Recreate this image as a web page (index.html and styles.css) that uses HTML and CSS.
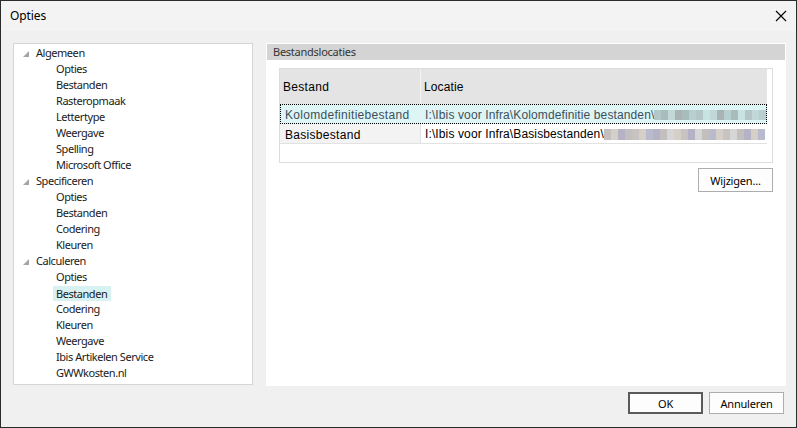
FILE: index.html
```html
<!DOCTYPE html>
<html lang="nl">
<head>
<meta charset="utf-8">
<title>Opties</title>
<link rel="stylesheet" href="styles.css">
</head>
<body>
<div class="window">
  <div class="titlebar">
    <span class="title">Opties</span>
    <svg class="close" width="12" height="12" viewBox="0 0 12 12"><path d="M1 1 L11 11 M11 1 L1 11" stroke="#000" stroke-width="1.1" fill="none"/></svg>
  </div>
  <div class="main">
    <div class="content">
      <div class="tree">
        <div class="node top"><svg class="tri" width="8" height="8" viewBox="0 0 8 8"><polygon points="7,1 7,7 1,7" fill="#a4a4a4"/></svg><span class="label">Algemeen</span></div>
        <div class="node child"><span class="label">Opties</span></div>
        <div class="node child"><span class="label">Bestanden</span></div>
        <div class="node child"><span class="label">Rasteropmaak</span></div>
        <div class="node child"><span class="label">Lettertype</span></div>
        <div class="node child"><span class="label">Weergave</span></div>
        <div class="node child"><span class="label">Spelling</span></div>
        <div class="node child"><span class="label">Microsoft Office</span></div>
        <div class="node top"><svg class="tri" width="8" height="8" viewBox="0 0 8 8"><polygon points="7,1 7,7 1,7" fill="#a4a4a4"/></svg><span class="label">Specificeren</span></div>
        <div class="node child"><span class="label">Opties</span></div>
        <div class="node child"><span class="label">Bestanden</span></div>
        <div class="node child"><span class="label">Codering</span></div>
        <div class="node child"><span class="label">Kleuren</span></div>
        <div class="node top"><svg class="tri" width="8" height="8" viewBox="0 0 8 8"><polygon points="7,1 7,7 1,7" fill="#a4a4a4"/></svg><span class="label">Calculeren</span></div>
        <div class="node child"><span class="label">Opties</span></div>
        <div class="node child"><span class="label selected">Bestanden</span></div>
        <div class="node child"><span class="label">Codering</span></div>
        <div class="node child"><span class="label">Kleuren</span></div>
        <div class="node child"><span class="label">Weergave</span></div>
        <div class="node child"><span class="label">Ibis Artikelen Service</span></div>
        <div class="node child"><span class="label">GWWkosten.nl</span></div>
      </div>
      <div class="panel">
        <div class="panel-header">Bestandslocaties</div>
        <div class="panel-body">
          <div class="grid">
            <div class="grid-inner">
              <div class="row head">
                <div class="cell c1">Bestand</div>
                <div class="cell c2">Locatie</div>
              </div>
              <div class="row sel">
                <div class="cell c1">Kolomdefinitiebestand</div>
                <div class="cell c2">I:\Ibis voor Infra\Kolomdefinitie bestanden\<span class="blur"><i class="t1"></i><i class="t2"></i><i class="t3"></i><i class="t4"></i><i class="t2"></i><i class="t5"></i><i class="t1"></i><i class="t6"></i><i class="t3"></i><i class="t4"></i><i class="t5"></i><i class="t2"></i><i class="t6"></i><i class="t1"></i><i class="t3"></i><i class="t5"></i></span></div>
              </div>
              <div class="row norm">
                <div class="cell c1">Basisbestand</div>
                <div class="cell c2">I:\Ibis voor Infra\Basisbestanden\<span class="blur"><i class="g1"></i><i class="g2"></i><i class="g3"></i><i class="g1"></i><i class="g4"></i><i class="g2"></i><i class="g5"></i><i class="g3"></i><i class="g1"></i><i class="g6"></i><i class="g2"></i><i class="g4"></i><i class="g3"></i><i class="g6"></i><i class="g1"></i><i class="g5"></i><i class="g2"></i><i class="g4"></i><i class="g6"></i><i class="g1"></i><i class="g3"></i><i class="g2"></i><i class="g5"></i></span></div>
              </div>
            </div>
          </div>
          <div class="actions">
            <button class="btn">Wijzigen...</button>
          </div>
        </div>
      </div>
    </div>
    <div class="footer">
      <button class="btn default">OK</button>
      <button class="btn">Annuleren</button>
    </div>
  </div>
</div>
</body>
</html>
```

FILE: styles.css
```css
* { box-sizing: border-box; }
html, body { margin: 0; padding: 0; background: #f0f0f0; }
body {
  font-family: "Noto Sans", "Open Sans", sans-serif;
  font-size: 11px;
  color: #000;
}
.window {
  width: 797px;
  height: 428px;
  border: 1px solid #2b2b2b;
  display: flex;
  flex-direction: column;
  background: #f0f0f0;
}
.titlebar {
  height: 30px;
  background: #f3f3f3;
  display: flex;
  align-items: center;
  justify-content: space-between;
  padding: 0 9px 0 9px;
  flex: none;
}
.title {
  font-size: 12px;
  letter-spacing: -0.1px;
  color: #000;
  margin-top: -1px;
}
.close { display: block; }
.main {
  flex: 1;
  display: flex;
  flex-direction: column;
  padding: 12px 10px 0 12px;
}
.content {
  display: flex;
  gap: 13px;
  height: 342px;
}
.tree {
  width: 240px;
  height: 342px;
  background: #fff;
  border: 1px solid #d5d5d5;
  padding-top: 1px;
}
.node {
  height: 16px;
  display: flex;
  align-items: center;
  white-space: nowrap;
  letter-spacing: -0.45px;
  color: #1a1a1a;
}
.node.top { padding-left: 8px; }
.node.child { padding-left: 39px; }
.tri { display: block; margin-right: 3px; margin-top: 1px; }
.label { padding: 0 3px; line-height: 16px; height: 16px; }
.label.selected { background: #d8f2f2; line-height: 15px; height: 15px; padding-right: 4px; }
.panel {
  width: 520px;
  height: 343px;
  background: #fff;
  padding: 1px 1px 0 1px;
}
.panel-header {
  height: 16px;
  background: #d4d4d4;
  color: #333;
  padding-left: 6px;
  line-height: 15px;
  letter-spacing: -0.25px;
}
.panel-body {
  padding: 8px 0 0 12px;
  display: flex;
  flex-direction: column;
  align-items: flex-start;
}
.grid {
  width: 494px;
  height: 95px;
  border: 1px solid #dcdcdc;
  padding-right: 5px;
  font-family: "Liberation Sans", Arial, sans-serif;
  font-size: 12px;
  letter-spacing: 0.3px;
}
.grid-inner { display: flex; flex-direction: column; }
.row { display: flex; }
.row.head { height: 35px; background: #e4e4e4; }
.row.head .cell { line-height: 35px; padding-left: 3px; padding-top: 1px; }
.row.head .c1 { border-right: 1px solid #f4f4f4; }
.cell { white-space: nowrap; overflow: hidden; }
.c1 { width: 141px; }
.c2 { flex: 1; display: flex; align-items: center; letter-spacing: 0.12px; }
.row.sel {
  height: 20px;
  background: #def5f5;
  outline: 1px dotted #000;
  outline-offset: -1px;
  color: #3d4f5c;
}
.row.sel .cell { line-height: 20px; padding-left: 5px; padding-top: 1px; }
.row.sel .c2 { padding-left: 4px; }
.row.norm {
  height: 20px;
  border-bottom: 1px solid #e2e2e2;
}
.row.norm .cell { line-height: 19px; padding-left: 5px; padding-top: 2px; }
.row.norm .c1 { background: #f3f3f3; border-right: 1px solid #e2e2e2; }
.row.norm .c2 { padding-left: 4px; }
.blur { display: flex; height: 10px; margin-left: 0; }
.row.norm .blur { height: 11px; margin-top: -1px; }
.blur i { display: block; width: 7px; height: 100%; flex: none; }
.t1 { background: #b3c7c7; }
.t2 { background: #a9bcbc; }
.t3 { background: #c2d8d8; }
.t4 { background: #aab3b3; }
.t5 { background: #b8cfcf; }
.t6 { background: #c9e2e2; }
.g1 { background: #c4bfbf; }
.g2 { background: #d4d0c8; }
.g3 { background: #b4b2c4; }
.g4 { background: #c8c2c2; }
.g5 { background: #babace; }
.g6 { background: #d6d6d6; }
.actions {
  width: 494px;
  display: flex;
  justify-content: flex-end;
  margin-top: 5px;
}
.btn {
  width: 75px;
  height: 24px;
  border: 1px solid #adadad;
  background: #fdfdfd;
  font-family: "Noto Sans", "Open Sans", sans-serif;
  font-size: 11px;
  letter-spacing: -0.2px;
  color: #000;
  padding: 0;
  margin: 0;
}
.footer {
  display: flex;
  justify-content: flex-end;
  gap: 6px;
  padding: 7px 2px 0 0;
}
.footer .btn { height: 22px; }
.btn.default { border: 2px solid #5a5a5a; }
```
